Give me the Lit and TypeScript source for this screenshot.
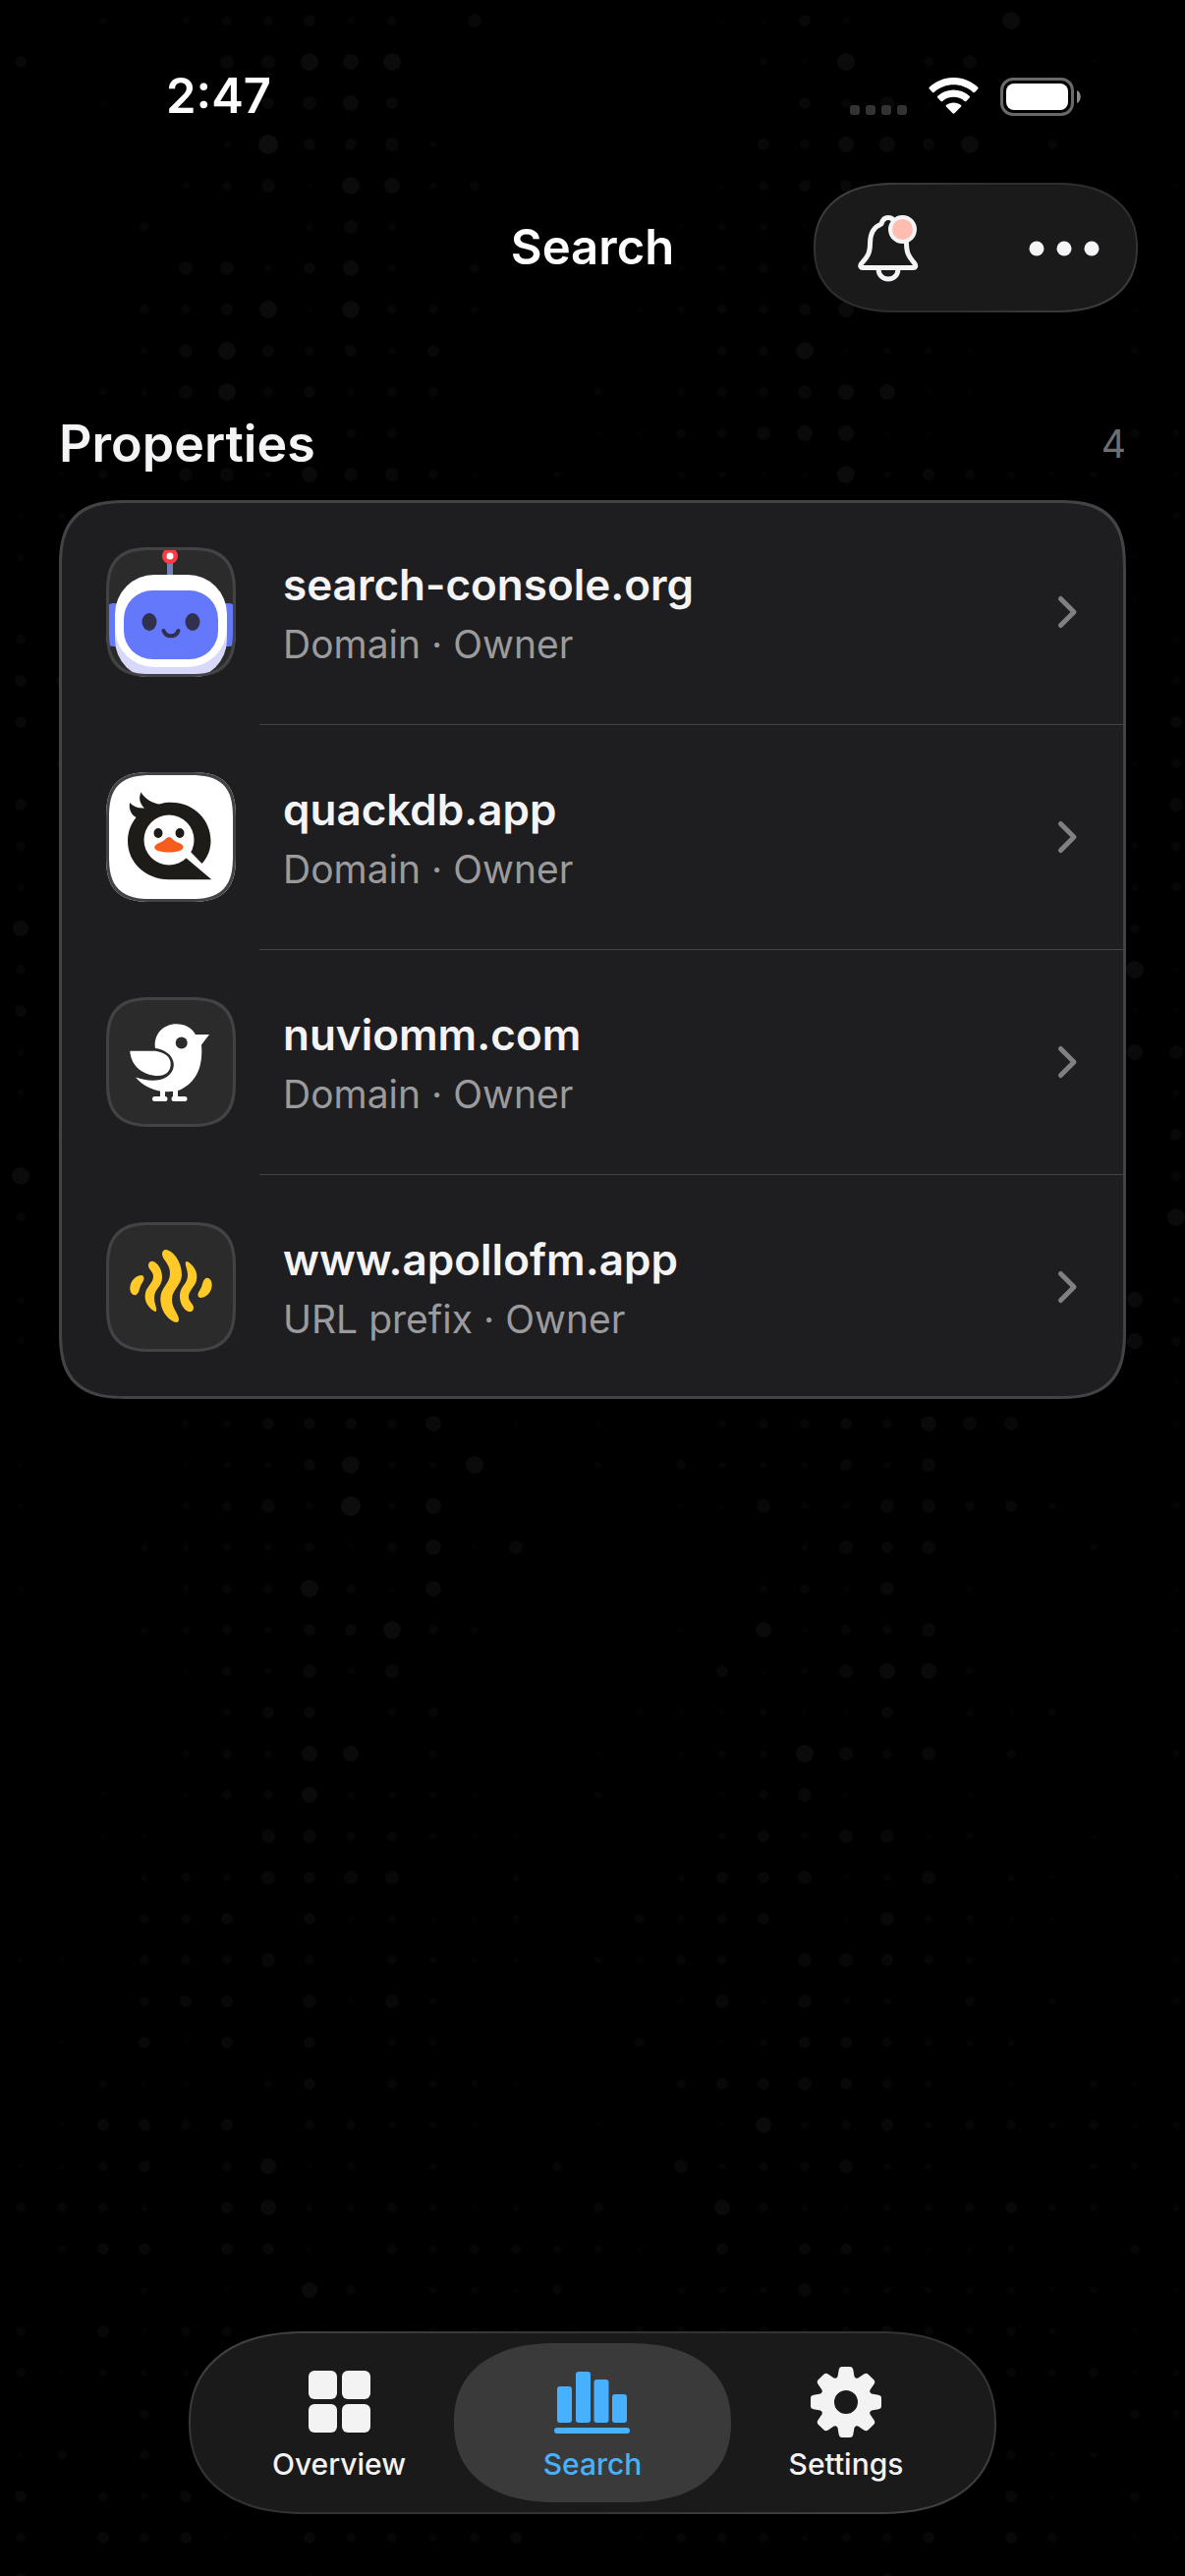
import { LitElement, html, svg, css, TemplateResult } from "lit";
import { customElement, property, state } from "lit/decorators.js";
import { classMap } from "lit/directives/class-map.js";

interface Property {
  domain: string;
  kind: string;
  role: string;
  icon: TemplateResult;
}

interface Tab {
  id: string;
  label: string;
  icon: TemplateResult;
}

// one character per dot, 1 (tiny) to 9 (large), "." for no dot
const DOTS = [
  "..3.344534161.1..225311.8....",
  "5...166878........328146..2.1",
  "..2.2.5675.........54622..1..",
  "....1395563.......54775814...",
  "....34628734....12455.......2",
  "...41113631.....2332.......1.",
  "...1663573.4....2343........1",
  "1..445828443...234457..2...2.",
  "...36854535.....144823321..3.",
  "..336845344.1.3.344677221.11.",
  "..1.4.2.44....224467722....43",
  ".24.66376642.3..33228354323.2",
  "23..........................3",
  "3..........................21",
  "12.........................21",
  "41..........................2",
  "55.........................13",
  "53.........................15",
  ".4.........................24",
  "5..........................16",
  "42.........................34",
  "31.........................34",
  "73.........................4.",
  "41.........................82",
  "5..........................22",
  "3..........................76",
  "32..........................3",
  ".4..........................5",
  "8...........................4",
  "4...........................8",
  ".............................",
  "3..........................73",
  "3..........................74",
  "............................2",
  "...13355547.212.134454766...2",
  "2...233583381.3.43335361.....",
  "2...3463937.1...2263366453..3",
  "1.13333424726..1...3656.113..",
  "21..344842711.....3426.2....2",
  "...334355843...12.72446.....2",
  "...12436361......5236773.....",
  "....13551341...2223225.323...",
  ".1..34377131.12.233864614...3",
  ".12.24473332..3..2462..2.1...",
  "..221.6644322...135366231.21.",
  "1113436566..31.13556236132..2",
  "...4451523223..43451263322...",
  "22.4446414322.32441665431...2",
  "...45516263.....2626331413.13",
  ".2.525.5133.1..4123554333....",
  "11322.35.4332...455654312.32.",
  "125545144332.121.273453443423",
  "224514723.31.4.16344633..133.",
  "4443.57334323.4..7432334533.3",
  ".355.552.4344332.51553223.14.",
  "...3.2.74.3324..3336333332312",
  "4.5244..21333..44343454343.21",
  "42333...................43423",
  "...4.....................1.43",
  "24.4....................423..",
  "5.435...................52.4.",
  "4.5452.544345.124443445.54.22",
  "5......3....2........5.......",
];

const DOT_PITCH = 42;

const robot = html`
  <svg viewBox="0 0 132 132" aria-hidden="true">
    <rect x="62" y="14" width="6" height="18" fill="#7480b8" />
    <circle cx="65" cy="9" r="8" fill="#fb3c44" />
    <circle cx="65" cy="9" r="3.5" fill="#fff" />
    <rect x="0" y="57" width="20" height="44" rx="7" fill="#6478fb" />
    <rect x="112" y="57" width="20" height="44" rx="7" fill="#6478fb" />
    <rect x="9" y="40" width="114" height="94" rx="40" fill="#d8d8fa" />
    <rect x="9" y="28" width="114" height="94" rx="40" fill="#fff" />
    <rect x="18" y="44" width="96" height="70" rx="29" fill="#6478fb" />
    <ellipse cx="44" cy="76" rx="7.5" ry="9" fill="#32304f" />
    <ellipse cx="88" cy="76" rx="7.5" ry="9" fill="#32304f" />
    <path d="M58.5 85C61 92 71 92 73.5 85" fill="none" stroke="#32304f" stroke-width="4" stroke-linecap="round" />
  </svg>
`;

const duck = html`
  <svg viewBox="0 0 132 132" aria-hidden="true">
    <rect width="132" height="132" fill="#fff" />
    <path
      d="M107.3 109.3H64C40 109 22 92 22 70C22 61 25 53 30.5 46C25.5 43 23 38 24 31C28 35 33 37 39 36.5C34 32 33 26 35.5 20.3C39 27 47 31.5 54 32.5C58 31 62 30.7 66 30.7C89 30.7 106.5 48 106.5 70C106.5 79 103 87 97.5 93L85 80L81 87Z"
      fill="#1e1c18"
    />
    <circle cx="64" cy="69" r="25.5" fill="#fff" />
    <ellipse cx="53" cy="62" rx="4.5" ry="5" fill="#1e1c18" />
    <ellipse cx="75" cy="62" rx="4.5" ry="5" fill="#1e1c18" />
    <path
      d="M64 66C67 66 68 70 73 71.5C77 73 79 74.5 78.5 77C77 80.5 70 81.5 64 81.5S50.5 80.5 49.2 77C49 74.5 51 73 55 71.5C60 70 61 66 64 66Z"
      fill="#f85c1c"
    />
  </svg>
`;

const bird = html`
  <svg viewBox="0 0 132 132" aria-hidden="true">
    <g fill="#fff">
      <path
        d="M105 38L97 48.5C99 72 91 87 75 94.5C58 99 40 94 30 81.5C38 84.5 47 85.5 55 84C66 81 70 73 68.5 66C66.5 58 59 53 50 52C48 38 58 27.3 71.7 27.3C80 27.3 87 31 91 38Z"
      />
      <path d="M24.3 54.7H50C60 56 65.7 61 65.7 68C65.7 76 60 80 53 80C38 80 25 70 24.3 54.7Z" />
      <path d="M55 93H60V101Q62.5 101 62.5 103.5T60 106H49.5Q47 106 47 103.5T49.5 101H55Z" />
      <path d="M68 93H73V101H80Q82.5 101 82.5 103.5T80 106H69Q66.5 106 66.5 103.5T68 101Z" />
    </g>
    <circle cx="76.7" cy="46.5" r="6" fill="#2b2b2b" />
  </svg>
`;

const waveHalf = svg`
  <path d="M36.5 54C30 54 24.5 60 24.3 67C24.3 72 27 75 30.5 74C34 72 33.5 67 36 63C38.5 59 40 56 36.5 54Z" />
  <path
    d="M47.3 39.7C53 41 57.5 49 57 57C56.5 66 49 68 49 77C49 83 52 87 51 90.5C50 92 46.5 89.5 44 86.5C40 82 39 77 40 72C41.5 65 48 62 48 55C48 50 43 48 43 44C43 41 45 39.5 47.3 39.7Z"
  />
`;

const waves = html`
  <svg viewBox="0 0 132 132" fill="#ffc928" aria-hidden="true">
    ${waveHalf}
    <path
      d="M60.7 28C69 29 77.5 42 77 54C76.5 65 67 68 67 79C67 88 74.5 94 74 99.5C73.5 103 70 102.5 66.5 100C59 95 55 86 55.3 77C55.7 66 65 63 65 52C65 42 57 38 57 32.5C57 29.5 58.5 28 60.7 28Z"
    />
    <g transform="rotate(180 66 65.5)">${waveHalf}</g>
  </svg>
`;

const properties: Property[] = [
  { domain: "search-console.org", kind: "Domain", role: "Owner", icon: robot },
  { domain: "quackdb.app", kind: "Domain", role: "Owner", icon: duck },
  { domain: "nuviomm.com", kind: "Domain", role: "Owner", icon: bird },
  { domain: "www.apollofm.app", kind: "URL prefix", role: "Owner", icon: waves },
];

const tabs: Tab[] = [
  {
    id: "overview",
    label: "Overview",
    icon: html`
      <svg viewBox="0 0 78 78" fill="currentColor" aria-hidden="true">
        <rect x="8" y="7" width="29" height="29" rx="6" />
        <rect x="42" y="7" width="29" height="29" rx="6" />
        <rect x="8" y="41" width="29" height="29" rx="6" />
        <rect x="42" y="41" width="29" height="29" rx="6" />
      </svg>
    `,
  },
  {
    id: "search",
    label: "Search",
    icon: html`
      <svg viewBox="0 0 78 78" fill="currentColor" aria-hidden="true">
        <rect x="3" y="23" width="15" height="37" rx="3" />
        <rect x="22" y="8" width="15" height="52" rx="3" />
        <rect x="40.5" y="16" width="15" height="44" rx="3" />
        <rect x="59" y="31" width="15" height="29" rx="3" />
        <rect x="0" y="65" width="77" height="6" rx="3" />
      </svg>
    `,
  },
  {
    id: "settings",
    label: "Settings",
    icon: html`
      <svg viewBox="-39 -39 78 78" fill="currentColor" aria-hidden="true">
        <circle r="19" fill="none" stroke="currentColor" stroke-width="14" />
        ${[0, 45, 90, 135, 180, 225, 270, 315].map(
          (angle) => svg`
            <path
              transform="rotate(${angle})"
              d="M-11 -23L-8.5 -26L-7.3 -33Q-6.7 -36 -4 -36H4Q6.7 -36 7.3 -33L8.5 -26L11 -23Z"
            />
          `
        )}
      </svg>
    `,
  },
];

@customElement("dot-backdrop")
class DotBackdrop extends LitElement {
  static styles = css`
    :host {
      display: block;
      overflow: hidden;
    }

    svg {
      display: block;
      width: 100%;
      height: 100%;
    }
  `;

  render() {
    return html`
      <svg fill="#f0f0ff" aria-hidden="true">
        ${DOTS.map((row, y) =>
          [...row].map((dot, x) => {
            const level = Number(dot);
            if (!level) return null;
            return svg`<circle
              cx=${DOT_PITCH / 2 + x * DOT_PITCH}
              cy=${DOT_PITCH / 2 + y * DOT_PITCH}
              r=${level + 1}
              fill-opacity=${level * 0.006}
            />`;
          })
        )}
      </svg>
    `;
  }
}

@customElement("status-bar")
class StatusBar extends LitElement {
  static styles = css`
    :host {
      display: flex;
      align-items: center;
      justify-content: space-between;
      padding: 68px 106px 0 169px;
    }

    .time {
      font-size: 49px;
      line-height: 60px;
      font-weight: 600;
      color: #fff;
    }

    .indicators {
      display: flex;
      align-items: center;
      gap: 22px;
    }

    svg {
      display: block;
    }
  `;

  render() {
    return html`
      <span class="time">2:47</span>
      <div class="indicators">
        <svg width="58" height="38" viewBox="0 0 58 38" fill="#333334" role="img" aria-label="No signal">
          <rect x="0" y="28" width="10" height="10" rx="3" />
          <rect x="16" y="28" width="10" height="10" rx="3" />
          <rect x="32" y="28" width="10" height="10" rx="3" />
          <rect x="48" y="28" width="10" height="10" rx="3" />
        </svg>
        <svg width="51" height="38" viewBox="0 0 51 38" fill="#fff" role="img" aria-label="Wi-Fi">
          <path
            d="M.8 9.8Q0 10.8 .8 11.6L4 14.9Q4.8 15.7 5.7 14.9C17 4.7 34 4.7 45.3 14.9Q46.2 15.7 47 14.9L50.2 11.6Q51 10.8 50.2 9.8C36 -3.3 15 -3.3 .8 9.8Z"
          />
          <path
            d="M9.3 18.7Q8.6 19.5 9.3 20.4L12.6 23.9Q13.4 24.6 14.3 23.9C20.5 18.4 30.5 18.4 36.7 23.9Q37.6 24.6 38.4 23.9L41.7 20.4Q42.4 19.5 41.7 18.7C32.5 10.5 18.5 10.5 9.3 18.7Z"
          />
          <path
            d="M17.9 28.1C22 24.6 29 24.6 33.1 28.1Q33.8 28.8 33.1 29.6L26.5 36.3Q25.5 37.2 24.5 36.3L17.9 29.6Q17.2 28.8 17.9 28.1Z"
          />
        </svg>
        <svg width="82" height="39" viewBox="0 0 82 39" role="img" aria-label="Battery full">
          <rect x="1.5" y="1.5" width="72" height="36" rx="11.5" fill="none" stroke="#69696a" stroke-width="3" />
          <rect x="6" y="6" width="63" height="27" rx="8" fill="#fff" />
          <path d="M78 13C83 15 83 24 78 26Z" fill="#8a8a8b" />
        </svg>
      </div>
    `;
  }
}

@customElement("property-list")
class PropertyList extends LitElement {
  @property({ attribute: false }) items: Property[] = [];

  static styles = css`
    :host {
      display: block;
      padding: 0 60px;
    }

    .heading {
      display: flex;
      align-items: center;
      justify-content: space-between;
      margin-bottom: 27px;
    }

    h2 {
      margin: 0;
      font-size: 52px;
      line-height: 60px;
      font-weight: 600;
      color: #f4f4f6;
    }

    .count {
      font-size: 39px;
      line-height: 50px;
      color: #6e6e70;
    }

    .card {
      list-style: none;
      margin: 0;
      padding: 0;
      background: #1e1e20;
      outline: 3px solid #434345;
      outline-offset: -3px;
      border-radius: 54px;
    }

    .item:not(:last-child)::after {
      content: "";
      display: block;
      height: 1px;
      margin-left: 204px;
      background: #434345;
    }

    .row {
      display: flex;
      align-items: center;
      gap: 48px;
      padding: 48px;
      color: inherit;
      text-decoration: none;
    }

    .favicon {
      flex: none;
      width: 132px;
      height: 132px;
      overflow: hidden;
      background: #2b2b2b;
      outline: 3px solid #434345;
      outline-offset: -3px;
      border-radius: 36px;
    }

    .favicon svg,
    .chevron {
      display: block;
    }

    .text {
      flex: 1;
      min-width: 0;
      display: flex;
      flex-direction: column;
      gap: 6px;
    }

    .domain {
      font-size: 44px;
      line-height: 60px;
      font-weight: 600;
      color: #f4f4f6;
    }

    .meta {
      font-size: 39px;
      line-height: 50px;
      color: #9b9b9e;
    }

    @supports (corner-shape: superellipse(1.5)) {
      .card {
        border-radius: 72px;
        corner-shape: superellipse(1.5);
      }

      .favicon {
        border-radius: 48px;
        corner-shape: superellipse(1.5);
      }
    }
  `;

  render() {
    return html`
      <div class="heading">
        <h2>Properties</h2>
        <span class="count">${this.items.length}</span>
      </div>
      <ul class="card">
        ${this.items.map(
          (item) => html`
            <li class="item">
              <a class="row" href="#${item.domain}">
                <div class="favicon">${item.icon}</div>
                <div class="text">
                  <span class="domain">${item.domain}</span>
                  <span class="meta">${item.kind} · ${item.role}</span>
                </div>
                <svg class="chevron" width="24" height="36" viewBox="0 0 24 36" aria-hidden="true">
                  <path
                    d="M5.5 4.5L19 18L5.5 31.5"
                    fill="none"
                    stroke="#808081"
                    stroke-width="5"
                    stroke-linecap="round"
                    stroke-linejoin="round"
                  />
                </svg>
              </a>
            </li>
          `
        )}
      </ul>
    `;
  }
}

@customElement("tab-bar")
class TabBar extends LitElement {
  @state() private active = "search";

  static styles = css`
    :host {
      display: flex;
      justify-content: center;
    }

    .bar {
      display: flex;
      padding: 10px;
      border: 2px solid transparent;
      border-radius: 93px;
      background:
        linear-gradient(#1a1a1a, #1a1a1a) padding-box,
        linear-gradient(165deg, #444 0%, #333 30%, #333 70%, #444 100%) border-box;
    }

    .tab {
      display: flex;
      flex-direction: column;
      align-items: center;
      gap: 6px;
      width: 282px;
      padding: 21px 0;
      border: 0;
      border-radius: 81px;
      background: none;
      color: #f3f3f3;
      font: inherit;
      font-size: 30px;
      line-height: 36px;
      font-weight: 500;
    }

    .tab + .tab {
      margin-left: -24px;
    }

    .tab.active {
      background: #3a3a3a;
      color: #47b1ff;
    }

    .tab svg {
      display: block;
      width: 78px;
      height: 78px;
    }

    @supports (corner-shape: superellipse(1.2)) {
      .bar {
        border-radius: 118px / 93px;
        corner-shape: superellipse(1.2);
      }

      .tab {
        border-radius: 104px / 81px;
        corner-shape: superellipse(1.2);
      }
    }
  `;

  render() {
    return html`
      <nav class="bar" aria-label="Main">
        ${tabs.map(
          (tab) => html`
            <button
              class=${classMap({ tab: true, active: tab.id === this.active })}
              @click=${() => (this.active = tab.id)}
            >
              ${tab.icon}
              <span>${tab.label}</span>
            </button>
          `
        )}
      </nav>
    `;
  }
}

@customElement("app-root")
class AppRoot extends LitElement {
  static styles = css`
    :host {
      display: block;
      background: #000;
      font-family: Inter, "Liberation Sans", sans-serif;
    }

    .screen {
      position: relative;
      box-sizing: border-box;
      min-height: 100vh;
      display: flex;
      flex-direction: column;
      padding-bottom: 63px;
    }

    .backdrop {
      position: absolute;
      inset: 0;
    }

    .top,
    .content,
    .tabs {
      position: relative;
    }

    .header {
      display: grid;
      grid-template-columns: 1fr auto 1fr;
      align-items: center;
      padding: 58px 48px 104px;
    }

    h1 {
      grid-column: 2;
      margin: 0;
      font-size: 49px;
      line-height: 60px;
      font-weight: 600;
      color: #fff;
    }

    .actions {
      justify-self: end;
      display: flex;
      gap: 46px;
      padding: 0 8px;
      border: 2px solid transparent;
      border-radius: 66px;
      background:
        linear-gradient(#1a1a1a, #1a1a1a) padding-box,
        linear-gradient(155deg, #444 0%, #2e2e2e 30%, #2e2e2e 70%, #444 100%) border-box;
    }

    .action {
      display: grid;
      place-items: center;
      width: 132px;
      height: 128px;
      padding: 0;
      border: 0;
      background: none;
    }

    .tabs {
      margin-top: auto;
    }

    @supports (corner-shape: superellipse(1.2)) {
      .actions {
        border-radius: 82px / 66px;
        corner-shape: superellipse(1.2);
      }
    }
  `;

  render() {
    return html`
      <div class="screen">
        <dot-backdrop class="backdrop"></dot-backdrop>
        <div class="top">
          <status-bar></status-bar>
          <header class="header">
            <h1>Search</h1>
            <div class="actions">
              <button class="action" aria-label="Notifications">
                <svg width="78" height="78" viewBox="0 0 78 78" fill="none" stroke="#f4f4f6" stroke-width="5" aria-hidden="true">
                  <path
                    d="M32 15C33 11 35 8.5 39 8.5S45 11 46 15C54 19 57.5 25 57.5 35C57.5 47 62 50 66 55.5C67.5 58 66.5 59.5 64.5 59.5H13C11 59.5 10 58 11.5 55.5C16 50 20.5 47 20.5 35C20.5 25 24 18 32 15Z"
                    stroke-linejoin="round"
                  />
                  <path d="M29 60C29 67 33 71 39 71S49 67 49 60" />
                  <circle cx="53.5" cy="20.5" r="12.5" fill="#ffbdb2" stroke-width="4" />
                </svg>
              </button>
              <button class="action" aria-label="More">
                <svg width="78" height="78" viewBox="0 0 78 78" fill="#f4f4f6" aria-hidden="true">
                  <circle cx="12" cy="40" r="7.5" />
                  <circle cx="40" cy="40" r="7.5" />
                  <circle cx="68" cy="40" r="7.5" />
                </svg>
              </button>
            </div>
          </header>
        </div>
        <main class="content">
          <property-list .items=${properties}></property-list>
        </main>
        <tab-bar class="tabs"></tab-bar>
      </div>
    `;
  }
}
